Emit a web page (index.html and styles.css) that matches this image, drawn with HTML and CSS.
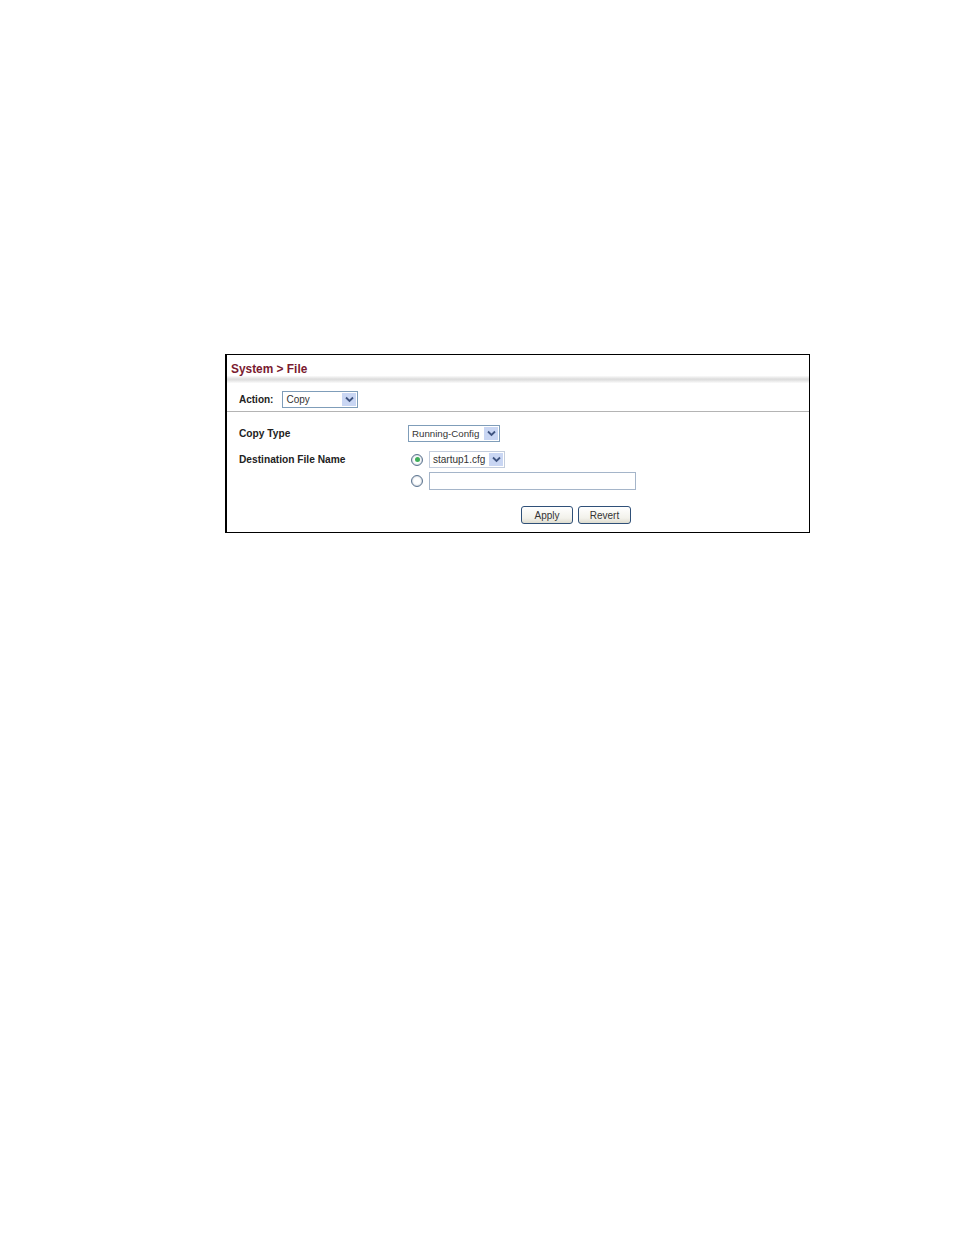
FILE: index.html
```html
<!DOCTYPE html>
<html lang="en">
<head>
  <meta charset="UTF-8" />
  <title>System &gt; File</title>
  <link rel="stylesheet" href="styles.css">
</head>
<body>
  <div class="frame">
    <div class="title">System &gt; File</div>
    <div class="title-bar"></div>

    <div class="action-row">
      <span class="action-label">Action:</span>
      <div class="select select-action">
        <span class="select-text">Copy</span>
        <span class="arrow"><svg width="9" height="7" viewBox="0 0 9 7"><path d="M1 1.5 4.5 5 8 1.5" fill="none" stroke="#3f5480" stroke-width="1.8"/></svg></span>
      </div>
    </div>

    <div class="form">
      <div class="form-row copy-row">
        <span class="field-label">Copy Type</span>
        <div class="select select-type">
          <span class="select-text">Running-Config</span>
          <span class="arrow"><svg width="9" height="7" viewBox="0 0 9 7"><path d="M1 1.5 4.5 5 8 1.5" fill="none" stroke="#3f5480" stroke-width="1.8"/></svg></span>
        </div>
      </div>

      <div class="form-row dest-row">
        <span class="field-label">Destination File Name</span>
        <div class="dest-options">
          <div class="option">
            <span class="radio checked"></span>
            <div class="select select-file">
              <span class="select-text">startup1.cfg</span>
              <span class="arrow"><svg width="9" height="7" viewBox="0 0 9 7"><path d="M1 1.5 4.5 5 8 1.5" fill="none" stroke="#3f5480" stroke-width="1.8"/></svg></span>
            </div>
          </div>
          <div class="option">
            <span class="radio"></span>
            <div class="text-input"></div>
          </div>
        </div>
      </div>

      <div class="buttons">
        <button class="btn btn-apply">Apply</button>
        <button class="btn btn-revert">Revert</button>
      </div>
    </div>
  </div>
</body>
</html>
```

FILE: styles.css
```css
body {
  margin: 0;
  padding: 354px 0 0 225px;
  background: #fff;
  font-family: "Liberation Sans", Arial, sans-serif;
  color: #222;
}

.frame {
  box-sizing: border-box;
  width: 585px;
  height: 179px;
  border: 1px solid #000;
  border-left-width: 2px;
}

.title {
  height: 21px;
  padding: 7px 0 0 4px;
  box-sizing: border-box;
  font-size: 11.9px;
  font-weight: bold;
  line-height: 14px;
  color: #7a1a30;
}

.title-bar {
  height: 7px;
  background: linear-gradient(#fafafa, #dcdcdc 45%, #e2e2e2 60%, #fbfbfb);
}

.action-row {
  display: flex;
  align-items: center;
  gap: 9px;
  height: 28px;
  margin-top: 1px;
  padding: 4px 0 0 12px;
  box-sizing: border-box;
  border-bottom: 1px solid #b4b4b4;
}

.action-label {
  font-size: 10px;
  font-weight: bold;
}

.select {
  display: flex;
  align-items: center;
  justify-content: space-between;
  box-sizing: border-box;
  height: 17px;
  padding: 0 1px 0 3px;
  border: 1px solid #7f9db9;
  background: #fff;
}

.select-text {
  font-size: 10px;
  color: #333;
}

.arrow {
  display: flex;
  align-items: center;
  justify-content: center;
  width: 14px;
  height: 13px;
  background: #c9d6f3;
}

.select-action {
  width: 76px;
}

.select-type {
  width: 92px;
}

.select-type .select-text {
  font-size: 9.7px;
}

.select-file {
  width: 76px;
  border-color: #c3cddd;
}

.form {
  padding: 13px 0 0 12px;
}

.form-row {
  display: flex;
}

.field-label {
  width: 169px;
  font-size: 10.2px;
  font-weight: bold;
}

.copy-row {
  align-items: center;
  height: 17px;
}

.dest-row {
  margin-top: 9px;
}

.dest-row .field-label {
  line-height: 17px;
}

.dest-options {
  display: flex;
  flex-direction: column;
  gap: 4px;
}

.option {
  display: flex;
  align-items: center;
  gap: 6px;
  padding-left: 3px;
}

.radio {
  position: relative;
  box-sizing: border-box;
  width: 12px;
  height: 12px;
  border: 1px solid #5d7590;
  border-radius: 50%;
  background: radial-gradient(#fff 40%, #d5dae0);
  box-shadow: inset 0 0 1px #8a9db3;
}

.radio.checked::after {
  content: "";
  position: absolute;
  inset: 0;
  margin: auto;
  width: 5px;
  height: 5px;
  border-radius: 50%;
  background: #3fae5a;
}

.text-input {
  box-sizing: border-box;
  width: 207px;
  height: 18px;
  border: 1px solid #a5b5c9;
  background: #fff;
}

.buttons {
  display: flex;
  gap: 5px;
  margin: 16px 0 0 282px;
}

.btn {
  box-sizing: border-box;
  width: 52px;
  height: 18px;
  padding: 0;
  border: 1px solid #2f5078;
  border-radius: 3px;
  background: linear-gradient(#ffffff, #f2f1ea 70%, #dedccf);
  font-family: "Liberation Sans", Arial, sans-serif;
  font-size: 10px;
  color: #333;
}

.btn-revert {
  width: 53px;
}
```
